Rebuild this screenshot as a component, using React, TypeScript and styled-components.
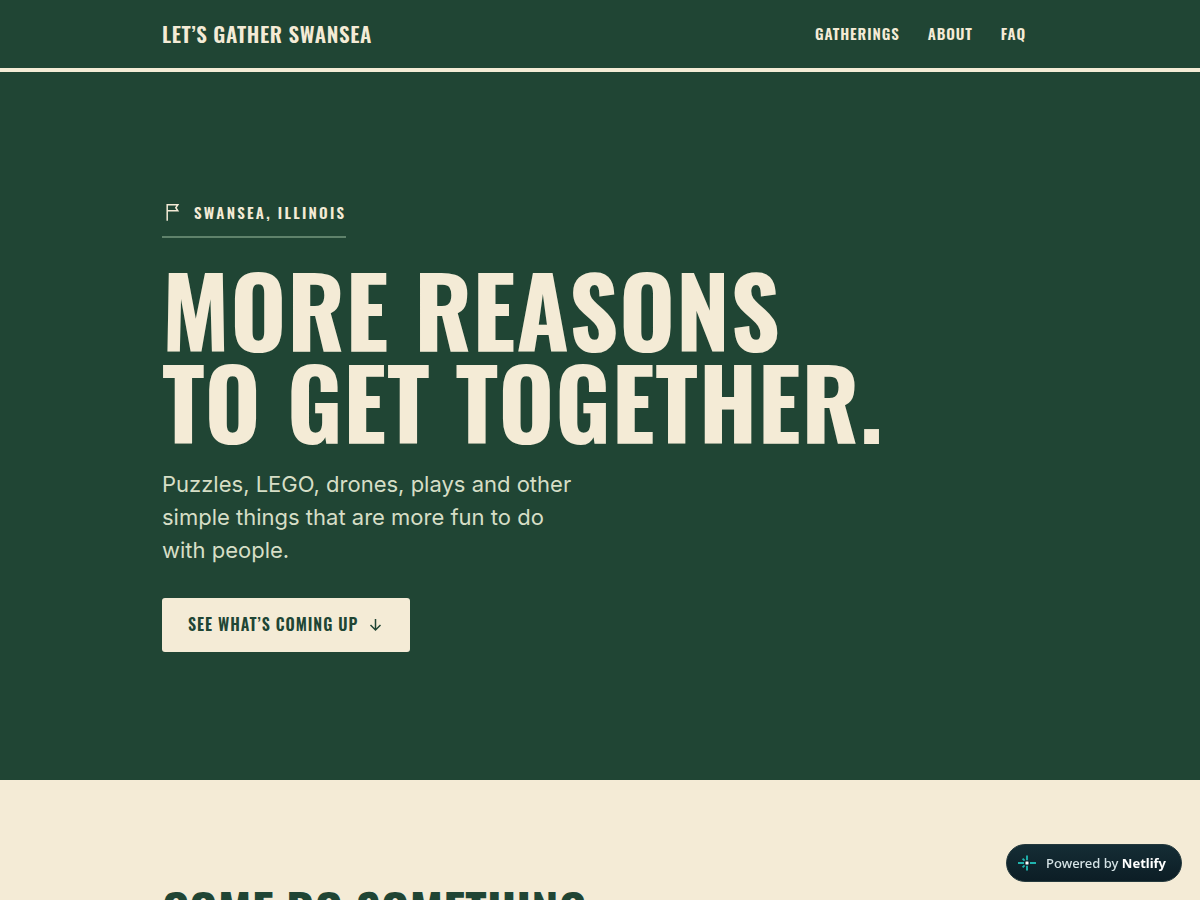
import React from 'react';
import styled, { createGlobalStyle } from 'styled-components';

const green = '#204534';
const cream = '#f4ebd6';
const display = "Oswald, 'Open Sans Condensed', 'Roboto Condensed', sans-serif";

const GlobalStyle = createGlobalStyle`
  *, *::before, *::after { box-sizing: border-box; }
  body {
    margin: 0;
    background: ${cream};
    color: ${green};
    font-family: Inter, 'Liberation Sans', sans-serif;
  }
  h1, h2, p { margin: 0; }
`;

const Container = styled.div`
  width: 100%;
  max-width: 924px;
  margin: 0 auto;
  padding: 0 24px;
`;

const Header = styled.header`
  background: ${green};
  border-bottom: 4px solid ${cream};
`;

const HeaderRow = styled(Container)`
  display: flex;
  align-items: center;
  justify-content: space-between;
  flex-wrap: wrap;
  min-height: 68px;
`;

const Brand = styled.a`
  font: 600 21px/32px ${display};
  letter-spacing: 0.03em;
  text-transform: uppercase;
  text-decoration: none;
  color: ${cream};
`;

const Nav = styled.nav`
  display: flex;
  gap: 28px;
  padding: 0 12px 2px 0;
`;

const NavLink = styled.a`
  font: 600 15px/24px ${display};
  letter-spacing: 0.06em;
  text-transform: uppercase;
  text-decoration: none;
  color: ${cream};
`;

const Hero = styled.section`
  background: ${green};
  color: ${cream};
  padding: 128px 0;
`;

const Eyebrow = styled.p`
  display: flex;
  align-items: center;
  gap: 12px;
  width: fit-content;
  height: 38px;
  padding-bottom: 12px;
  border-bottom: 2px solid #5f826b;
  font: 600 15px/24px ${display};
  letter-spacing: 0.15em;
  text-transform: uppercase;
  margin-bottom: 25px;
`;

const Title = styled.h1`
  font: 700 96px/92px ${display};
  letter-spacing: 0.007em;
  text-transform: uppercase;
  margin-bottom: 21px;
`;

const TitleLine = styled.span`
  display: block;
`;

const Lead = styled.p`
  max-width: 420px;
  font-size: 22px;
  line-height: 33px;
  color: #d6dec6;
  margin-bottom: 31px;
`;

const Cta = styled.a`
  display: inline-flex;
  align-items: center;
  gap: 10px;
  padding: 14px 26px 16px;
  border-radius: 3px;
  background: ${cream};
  color: ${green};
  font: 600 16px/24px ${display};
  letter-spacing: 0.06em;
  text-transform: uppercase;
  text-decoration: none;
`;

const Gatherings = styled.section`
  padding: 104px 0 0;
`;

const SectionTitle = styled.h2`
  font: 700 48px/52px ${display};
  letter-spacing: 0.007em;
  text-transform: uppercase;
`;

const Badge = styled.a`
  position: fixed;
  right: 18px;
  bottom: 18px;
  display: flex;
  align-items: center;
  gap: 9px;
  height: 38px;
  padding: 0 15px 0 10px;
  border: 1px solid #24393d;
  border-radius: 19px;
  background: linear-gradient(#152d35, #0c1d25);
  color: #d5e3e6;
  font: 500 13px/20px 'Noto Sans', 'Open Sans', sans-serif;
  text-decoration: none;
  white-space: nowrap;

  strong {
    font-weight: 700;
    color: #fff;
  }
`;

const FlagIcon = () => (
  <svg width="20" height="20" viewBox="0 0 20 20" fill="none" stroke="currentColor" strokeWidth="1.5" aria-hidden="true">
    <path d="M5.2 18.8V2.8H15.8L13.8 5.7L15.8 8.8H5.2" />
  </svg>
);

const ArrowDownIcon = () => (
  <svg width="16" height="16" viewBox="0 0 16 16" fill="none" stroke="currentColor" strokeWidth="1.5" aria-hidden="true">
    <path d="M7.5 3V14M2.5 9L7.5 14L12.5 9" />
  </svg>
);

const NetlifyIcon = () => (
  <svg width="20" height="20" viewBox="0 0 20 20" fill="none" stroke="#20b3ae" strokeWidth="1.9" aria-hidden="true">
    <path d="M10 2.5V7.2M10 12.8V17.5M1 10H7M13 10H19M5.6 5.6L7.6 7.6M5.6 14.4L7.6 12.4" />
    <rect x="8.5" y="8.5" width="3" height="3" rx="0.5" fill="#fff" stroke="none" />
  </svg>
);

export default function App() {
  return (
    <>
      <GlobalStyle />
      <Header>
        <HeaderRow>
          <Brand href="#top">Let’s Gather Swansea</Brand>
          <Nav aria-label="Main">
            <NavLink href="#gatherings">Gatherings</NavLink>
            <NavLink href="#about">About</NavLink>
            <NavLink href="#faq">FAQ</NavLink>
          </Nav>
        </HeaderRow>
      </Header>
      <main id="top">
        <Hero>
          <Container>
            <Eyebrow>
              <FlagIcon />
              Swansea, Illinois
            </Eyebrow>
            <Title>
              <TitleLine>More reasons</TitleLine>
              <TitleLine>to get together.</TitleLine>
            </Title>
            <Lead>Puzzles, LEGO, drones, plays and other simple things that are more fun to do with people.</Lead>
            <Cta href="#gatherings">
              See what’s coming up
              <ArrowDownIcon />
            </Cta>
          </Container>
        </Hero>
        <Gatherings id="gatherings">
          <Container>
            <SectionTitle>Come do something</SectionTitle>
          </Container>
        </Gatherings>
      </main>
      <Badge href="#netlify">
        <NetlifyIcon />
        <span>
          Powered by <strong>Netlify</strong>
        </span>
      </Badge>
    </>
  );
}
